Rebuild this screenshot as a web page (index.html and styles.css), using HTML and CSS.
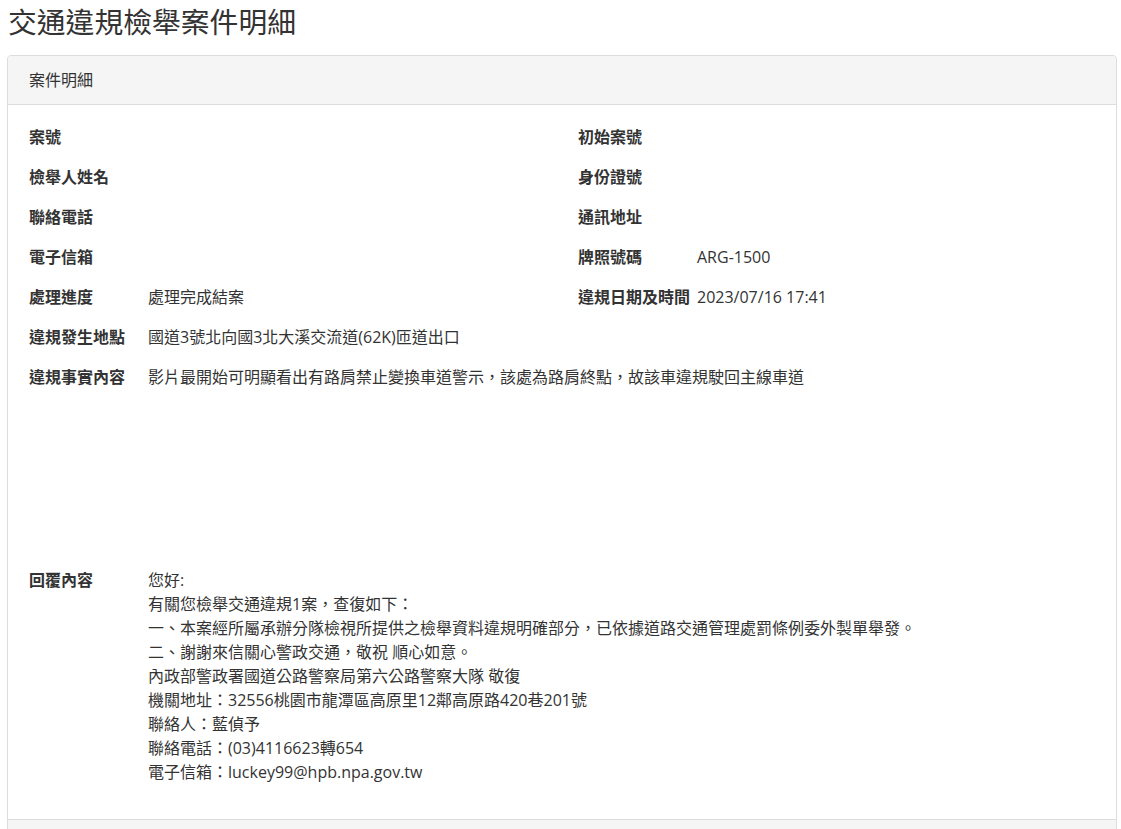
FILE: index.html
```html
<!DOCTYPE html>
<html lang="zh-Hant">
<head>
<meta charset="utf-8">
<title>交通違規檢舉案件明細</title>
<link rel="stylesheet" href="styles.css">
</head>
<body>
<div class="page">
  <h1 class="title">交通違規檢舉案件明細</h1>
  <div class="panel">
    <div class="panel-heading">案件明細</div>
    <div class="panel-body">
      <div class="grid">
        <div class="field"><div class="label">案號</div><div class="value"></div></div>
        <div class="field"><div class="label">初始案號</div><div class="value"></div></div>
        <div class="field"><div class="label">檢舉人姓名</div><div class="value"></div></div>
        <div class="field"><div class="label">身份證號</div><div class="value"></div></div>
        <div class="field"><div class="label">聯絡電話</div><div class="value"></div></div>
        <div class="field"><div class="label">通訊地址</div><div class="value"></div></div>
        <div class="field"><div class="label">電子信箱</div><div class="value"></div></div>
        <div class="field"><div class="label">牌照號碼</div><div class="value">ARG-1500</div></div>
        <div class="field"><div class="label">處理進度</div><div class="value">處理完成結案</div></div>
        <div class="field"><div class="label">違規日期及時間</div><div class="value">2023/07/16 17:41</div></div>
      </div>
      <div class="field full"><div class="label">違規發生地點</div><div class="value">國道3號北向國3北大溪交流道(62K)匝道出口</div></div>
      <div class="field full"><div class="label">違規事實內容</div><div class="value">影片最開始可明顯看出有路肩禁止變換車道警示，該處為路肩終點，故該車違規駛回主線車道</div></div>
      <div class="spacer"></div>
      <div class="field full"><div class="label">回覆內容</div>
        <div class="value reply">您好:<br>有關您檢舉交通違規1案，查復如下：<br>一、本案經所屬承辦分隊檢視所提供之檢舉資料違規明確部分，已依據道路交通管理處罰條例委外製單舉發。<br>二、謝謝來信關心警政交通，敬祝 順心如意。<br>內政部警政署國道公路警察局第六公路警察大隊 敬復<br>機關地址：32556桃園市龍潭區高原里12鄰高原路420巷201號<br>聯絡人：藍偵予<br>聯絡電話：(03)4116623轉654<br>電子信箱：luckey99@hpb.npa.gov.tw</div>
      </div>
    </div>
    <div class="panel-footer"></div>
  </div>
</div>
</body>
</html>
```
FILE: styles.css
```css
html, body {
  margin: 0;
  padding: 0;
  background: #fff;
}
body {
  font-family: "Open Sans", "Noto Sans CJK TC", sans-serif;
  font-size: 16px;
  color: #333;
}
.page {
  padding: 0 4px 0 7px;
}
.title {
  margin: 6px 0 0 1px;
  font-size: 28.8px;
  line-height: 32px;
  font-weight: 400;
  color: #333;
}
.panel {
  margin-top: 17px;
  border: 1px solid #ddd;
  border-radius: 4px;
  background: #fff;
}
.panel-heading {
  background: #f5f5f5;
  border-bottom: 1px solid #ddd;
  border-radius: 3px 3px 0 0;
  padding: 12px 21px;
  line-height: 24px;
  font-size: 16px;
}
.panel-body {
  padding: 12px 21px 27px;
}
.grid {
  display: grid;
  grid-template-columns: 549px 1fr;
}
.field {
  display: flex;
  padding: 8px 0;
  line-height: 24px;
}
.label {
  width: 119px;
  flex: none;
  font-weight: 700;
}
.value {
  flex: 1;
}
.spacer {
  height: 163px;
}
.panel-footer {
  background: #f5f5f5;
  border-top: 1px solid #ddd;
  height: 40px;
}
```
